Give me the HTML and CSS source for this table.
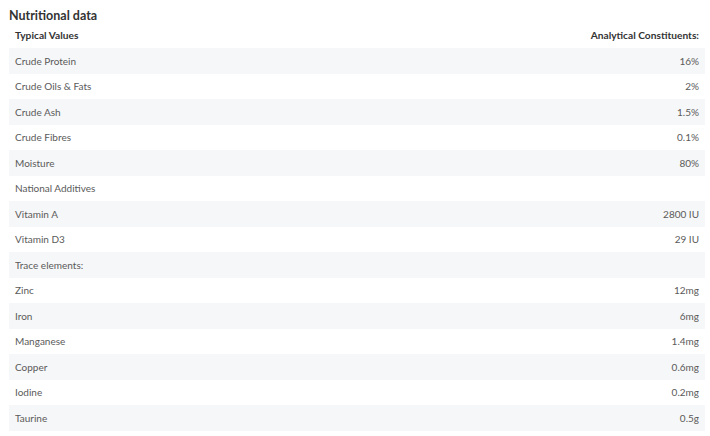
FILE: index.html
```html
<!DOCTYPE html>
<html lang="en">
<head>
<meta charset="utf-8">
<title>Nutritional data</title>
<link rel="stylesheet" href="styles.css">
</head>
<body>
<section class="nutrition">
  <h2 class="title">Nutritional data</h2>
  <table class="table">
    <thead>
      <tr><th>Typical Values</th><th class="num">Analytical Constituents:</th></tr>
    </thead>
    <tbody>
      <tr><td>Crude Protein</td><td class="num">16%</td></tr>
      <tr><td>Crude Oils &amp; Fats</td><td class="num">2%</td></tr>
      <tr><td>Crude Ash</td><td class="num">1.5%</td></tr>
      <tr><td>Crude Fibres</td><td class="num">0.1%</td></tr>
      <tr><td>Moisture</td><td class="num">80%</td></tr>
      <tr><td>National Additives</td><td class="num"></td></tr>
      <tr><td>Vitamin A</td><td class="num">2800 IU</td></tr>
      <tr><td>Vitamin D3</td><td class="num">29 IU</td></tr>
      <tr><td>Trace elements:</td><td class="num"></td></tr>
      <tr><td>Zinc</td><td class="num">12mg</td></tr>
      <tr><td>Iron</td><td class="num">6mg</td></tr>
      <tr><td>Manganese</td><td class="num">1.4mg</td></tr>
      <tr><td>Copper</td><td class="num">0.6mg</td></tr>
      <tr><td>Iodine</td><td class="num">0.2mg</td></tr>
      <tr><td>Taurine</td><td class="num">0.5g</td></tr>
    </tbody>
  </table>
</section>
</body>
</html>
```
FILE: styles.css
```css
html, body {
  margin: 0;
  padding: 0;
  background: #ffffff;
}
body {
  font-family: "Lato", "Open Sans", sans-serif;
  color: #5a5a5a;
}
.nutrition {
  padding: 7px 5px 0 9px;
}
.title {
  margin: 0;
  font-size: 12.5px;
  font-weight: 700;
  color: #333;
  line-height: 18px;
}
.table {
  width: 100%;
  border-collapse: collapse;
  font-size: 10px;
}
.table th {
  font-size: 10.2px;
  font-weight: 700;
  color: #333;
  text-align: left;
  height: 19px;
  padding: 0 6px 4px;
  vertical-align: middle;
}
.table td {
  height: 25.5px;
  padding: 0 6px;
  line-height: 14px;
}
.table .num {
  text-align: right;
}
.table tbody tr:nth-child(odd) {
  background: #f6f7f8;
}
```
